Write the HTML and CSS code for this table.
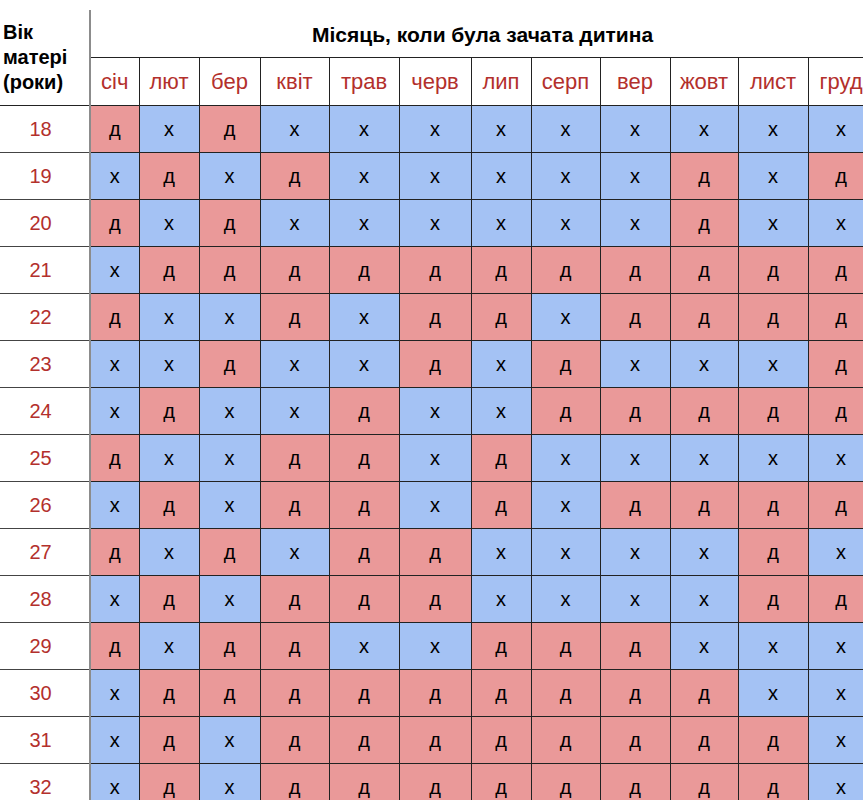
FILE: index.html
```html
<!DOCTYPE html>
<html lang="uk">
<head>
<meta charset="utf-8">
<title>Китайська таблиця</title>
<link rel="stylesheet" href="styles.css">
</head>
<body>
<table class="chart">
  <colgroup>
    <col class="c-age"><col class="w49"><col class="w60"><col class="w61"><col class="w69"><col class="w70"><col class="w72"><col class="w60"><col class="w69"><col class="w70"><col class="w68"><col class="w70"><col class="w66">
  </colgroup>
  <thead>
    <tr class="r-title">
      <th class="age-head" rowspan="2">Вік<br>матері<br>(роки)</th>
      <th class="title" colspan="12">Місяць, коли була зачата дитина</th>
    </tr>
    <tr class="r-months">
      <th class="m">січ</th><th class="m">лют</th><th class="m">бер</th><th class="m">квіт</th><th class="m">трав</th><th class="m">черв</th><th class="m">лип</th><th class="m">серп</th><th class="m">вер</th><th class="m">жовт</th><th class="m">лист</th><th class="m">груд</th>
    </tr>
  </thead>
  <tbody>
    <tr><td class="age">18</td><td class="g">д</td><td class="b">х</td><td class="g">д</td><td class="b">х</td><td class="b">х</td><td class="b">х</td><td class="b">х</td><td class="b">х</td><td class="b">х</td><td class="b">х</td><td class="b">х</td><td class="b">х</td></tr>
    <tr><td class="age">19</td><td class="b">х</td><td class="g">д</td><td class="b">х</td><td class="g">д</td><td class="b">х</td><td class="b">х</td><td class="b">х</td><td class="b">х</td><td class="b">х</td><td class="g">д</td><td class="b">х</td><td class="g">д</td></tr>
    <tr><td class="age">20</td><td class="g">д</td><td class="b">х</td><td class="g">д</td><td class="b">х</td><td class="b">х</td><td class="b">х</td><td class="b">х</td><td class="b">х</td><td class="b">х</td><td class="g">д</td><td class="b">х</td><td class="b">х</td></tr>
    <tr><td class="age">21</td><td class="b">х</td><td class="g">д</td><td class="g">д</td><td class="g">д</td><td class="g">д</td><td class="g">д</td><td class="g">д</td><td class="g">д</td><td class="g">д</td><td class="g">д</td><td class="g">д</td><td class="g">д</td></tr>
    <tr><td class="age">22</td><td class="g">д</td><td class="b">х</td><td class="b">х</td><td class="g">д</td><td class="b">х</td><td class="g">д</td><td class="g">д</td><td class="b">х</td><td class="g">д</td><td class="g">д</td><td class="g">д</td><td class="g">д</td></tr>
    <tr><td class="age">23</td><td class="b">х</td><td class="b">х</td><td class="g">д</td><td class="b">х</td><td class="b">х</td><td class="g">д</td><td class="b">х</td><td class="g">д</td><td class="b">х</td><td class="b">х</td><td class="b">х</td><td class="g">д</td></tr>
    <tr><td class="age">24</td><td class="b">х</td><td class="g">д</td><td class="b">х</td><td class="b">х</td><td class="g">д</td><td class="b">х</td><td class="b">х</td><td class="g">д</td><td class="g">д</td><td class="g">д</td><td class="g">д</td><td class="g">д</td></tr>
    <tr><td class="age">25</td><td class="g">д</td><td class="b">х</td><td class="b">х</td><td class="g">д</td><td class="g">д</td><td class="b">х</td><td class="g">д</td><td class="b">х</td><td class="b">х</td><td class="b">х</td><td class="b">х</td><td class="b">х</td></tr>
    <tr><td class="age">26</td><td class="b">х</td><td class="g">д</td><td class="b">х</td><td class="g">д</td><td class="g">д</td><td class="b">х</td><td class="g">д</td><td class="b">х</td><td class="g">д</td><td class="g">д</td><td class="g">д</td><td class="g">д</td></tr>
    <tr><td class="age">27</td><td class="g">д</td><td class="b">х</td><td class="g">д</td><td class="b">х</td><td class="g">д</td><td class="g">д</td><td class="b">х</td><td class="b">х</td><td class="b">х</td><td class="b">х</td><td class="g">д</td><td class="b">х</td></tr>
    <tr><td class="age">28</td><td class="b">х</td><td class="g">д</td><td class="b">х</td><td class="g">д</td><td class="g">д</td><td class="g">д</td><td class="b">х</td><td class="b">х</td><td class="b">х</td><td class="b">х</td><td class="g">д</td><td class="g">д</td></tr>
    <tr><td class="age">29</td><td class="g">д</td><td class="b">х</td><td class="g">д</td><td class="g">д</td><td class="b">х</td><td class="b">х</td><td class="g">д</td><td class="g">д</td><td class="g">д</td><td class="b">х</td><td class="b">х</td><td class="b">х</td></tr>
    <tr><td class="age">30</td><td class="b">х</td><td class="g">д</td><td class="g">д</td><td class="g">д</td><td class="g">д</td><td class="g">д</td><td class="g">д</td><td class="g">д</td><td class="g">д</td><td class="g">д</td><td class="b">х</td><td class="b">х</td></tr>
    <tr><td class="age">31</td><td class="b">х</td><td class="g">д</td><td class="b">х</td><td class="g">д</td><td class="g">д</td><td class="g">д</td><td class="g">д</td><td class="g">д</td><td class="g">д</td><td class="g">д</td><td class="g">д</td><td class="b">х</td></tr>
    <tr><td class="age">32</td><td class="b">х</td><td class="g">д</td><td class="b">х</td><td class="g">д</td><td class="g">д</td><td class="g">д</td><td class="g">д</td><td class="g">д</td><td class="g">д</td><td class="g">д</td><td class="g">д</td><td class="b">х</td></tr>
  </tbody>
</table>
</body>
</html>
```

FILE: styles.css
```css
html, body {
  margin: 0;
  padding: 0;
  background: #ffffff;
  overflow: hidden;
}

body {
  font-family: "Liberation Sans", Arial, sans-serif;
  color: #000;
  padding-top: 10px;
}

.chart {
  border-collapse: collapse;
  table-layout: fixed;
  width: 874px;
}

.c-age { width: 90px; }
.w49 { width: 49px; }
.w60 { width: 60px; }
.w61 { width: 61px; }
.w66 { width: 66px; }
.w68 { width: 68px; }
.w69 { width: 69px; }
.w70 { width: 70px; }
.w72 { width: 72px; }

.chart th,
.chart td {
  padding: 0;
  text-align: center;
  vertical-align: middle;
  border: 1px solid #222;
}

.r-title th {
  height: 45px;
}

.age-head {
  text-align: left !important;
  padding-left: 3px !important;
  font-size: 20px;
  font-weight: bold;
  line-height: 25px;
  border-top: none !important;
  border-left: none !important;
  border-right: 2px solid #8c8c8c !important;
}

.title {
  font-size: 21px;
  font-weight: bold;
  border-top: none !important;
  border-right: none !important;
  padding-top: 2px !important;
}

.r-months th {
  height: 47px;
}

.m {
  font-size: 22px;
  font-weight: normal;
  color: #b3302c;
}

.chart td {
  height: 46px;
  font-size: 20px;
}

.age {
  font-size: 22px;
  color: #b3302c;
  padding-right: 8px !important;
  border-left: none !important;
  border-right: 2px solid #8c8c8c !important;
  border-bottom-color: #444 !important;
}

.g { background: #ea9999; }
.b { background: #a4c2f4; }
```
